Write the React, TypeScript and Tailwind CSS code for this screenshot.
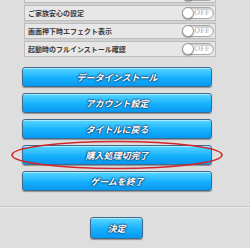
import { FC } from 'react'

const settings = [
  '',
  'ご家族安心の設定',
  '画面押下時エフェクト表示',
  '起動時のフルインストール確認',
]

const menu = [
  'データインストール',
  'アカウント設定',
  'タイトルに戻る',
  '購入処理切完了',
  'ゲームを終了',
]

const jp = "font-['Noto_Sans_CJK_JP','Noto_Sans',sans-serif]"

const Toggle: FC = () => (
  <div className="relative w-[32px] h-[12px] rounded-full border border-[#a9a9a9] bg-white shadow-[inset_0_1px_2px_rgba(0,0,0,0.25)] flex items-center justify-end pr-[3px]">
    <div className="absolute left-[-1px] top-[-1px] w-[12px] h-[12px] rounded-full bg-white border border-[#9a9a9a] shadow-[0_1px_1px_rgba(0,0,0,0.3)]" />
    <span className="text-[8px] leading-none font-bold text-[#c4c4c4] font-['Liberation_Serif',serif]">
      OFF
    </span>
  </div>
)

const BlueButton: FC<{ label: string; className?: string }> = ({ label, className }) => (
  <div
    className={`h-[20px] rounded-[3px] border border-[#3f6a8e] bg-gradient-to-b from-[#55d6ff] via-[#18b4fd] to-[#0898f2] shadow-[0_1px_1px_rgba(0,0,0,0.35),inset_0_1px_0_rgba(255,255,255,0.5)] flex items-center justify-center ${className ?? ''}`}
  >
    <span
      className={`${jp} text-[9px] leading-none font-bold italic text-white [text-shadow:0_0_1px_#0d3560,0_0_2px_#0d3560,0_0_2px_#0d3560]`}
    >
      {label}
    </span>
  </div>
)

export default function App() {
  return (
    <div className="relative w-[250px] h-[248px] overflow-hidden bg-[#dedede]">
      {/* Settings rows */}
      <div className="mx-[24px] mt-[-13px] w-[192px] bg-[#d2d2d2] flex flex-col gap-[2px]">
        {settings.map((s, i) => (
          <div
            key={i}
            className="h-[16px] bg-[#e7e7e7] border border-[#bdbdbd] flex items-center justify-between pl-[3px] pr-[1px]"
          >
            <span className={`${jp} text-[7px] leading-none font-bold text-[#3a3a3a]`}>{s}</span>
            <Toggle />
          </div>
        ))}
      </div>

      {/* Menu buttons */}
      <div className="mt-[10px] mx-[22px] w-[190px] flex flex-col gap-[6px]">
        {menu.map((m) => (
          <BlueButton key={m} label={m} />
        ))}
      </div>

      {/* Footer */}
      <div className="mt-[15px] h-px bg-[#c6c6c6] border-b border-[#ececec] box-content" />
      <div className="mt-[9px] pl-[90px]">
        <BlueButton label="決定" className="w-[53px] h-[22px]" />
      </div>

      {/* Red highlight ellipse */}
      <svg className="absolute left-[10px] top-[140px]" width="215" height="31" viewBox="0 0 215 31">
        <ellipse cx="107" cy="15" rx="105" ry="13.5" fill="none" stroke="#d0262a" strokeWidth="1.6" />
      </svg>
    </div>
  )
}
